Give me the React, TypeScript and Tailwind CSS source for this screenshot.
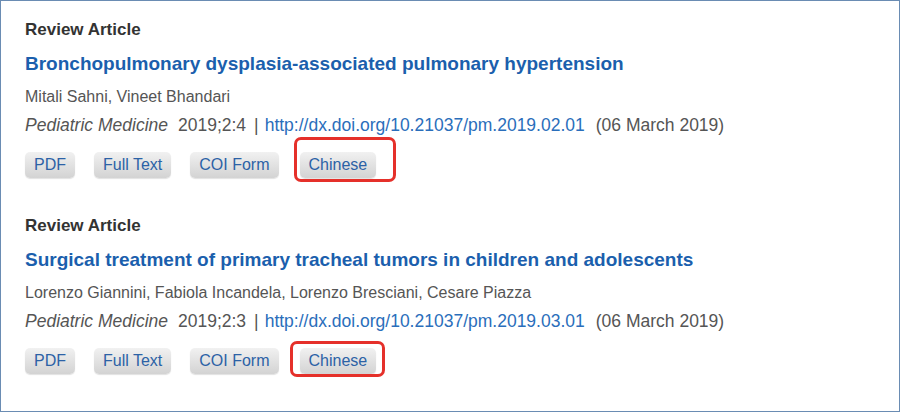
import type { ReactNode } from "react";

type Article = {
  title: string;
  authors: string;
  cite: string;
  doi: string;
  date: string;
  mark: string;
};

const articles: Article[] = [
  {
    title: "Bronchopulmonary dysplasia-associated pulmonary hypertension",
    authors: "Mitali Sahni, Vineet Bhandari",
    cite: "2019;2:4",
    doi: "http://dx.doi.org/10.21037/pm.2019.02.01",
    date: "(06 March 2019)",
    mark: "-left-[6px] -right-[20px] -top-[15px] -bottom-[4px]",
  },
  {
    title: "Surgical treatment of primary tracheal tumors in children and adolescents",
    authors: "Lorenzo Giannini, Fabiola Incandela, Lorenzo Bresciani, Cesare Piazza",
    cite: "2019;2:3",
    doi: "http://dx.doi.org/10.21037/pm.2019.03.01",
    date: "(06 March 2019)",
    mark: "-left-[10px] -right-[9px] -top-[7px] -bottom-[3px]",
  },
];

function Pill({ children }: { children: ReactNode }) {
  return (
    <span className="inline-flex h-[26px] items-center rounded-[5px] bg-gradient-to-b from-[#f1f1f1] to-[#d3d3d3] px-[9px] text-[16px] text-[#2c62a6] shadow-[0_1px_1px_rgba(0,0,0,0.12)]">
      {children}
    </span>
  );
}

function ArticleItem({ article }: { article: Article }) {
  return (
    <div className="mb-[38px]">
      <div className="text-[17px] font-bold leading-[20px] text-[#333]">Review Article</div>
      <div className="mt-3 text-[19px] font-bold leading-[24px] text-[#1b5fad]">{article.title}</div>
      <div className="mt-[11px] text-[16px] leading-[20px] text-[#555]">{article.authors}</div>
      <div className="mt-2 flex items-baseline whitespace-nowrap text-[17.5px] leading-[20px] text-[#555]">
        <i>Pediatric Medicine</i>
        <span className="ml-[10px]">{article.cite}</span>
        <span className="ml-[8px]">|</span>
        <span className="ml-[6px] text-[#2a6ebb]">{article.doi}</span>
        <span className="ml-[11px]">{article.date}</span>
      </div>
      <div className="mt-[17px] flex gap-[19px]">
        <Pill>PDF</Pill>
        <Pill>Full Text</Pill>
        <Pill>COI Form</Pill>
        <span className="relative ml-[2px]">
          <Pill>Chinese</Pill>
          <span className={`absolute rounded-[7px] border-[3px] border-[#e5302a] ${article.mark}`} />
        </span>
      </div>
    </div>
  );
}

export default function App() {
  return (
    <div
      className="h-[412px] w-[900px] overflow-hidden border border-[#6a8cb3] bg-white pl-[24px] pt-[19px]"
      style={{ fontFamily: "'Liberation Sans', Arial, sans-serif" }}
    >
      {articles.map((a) => (
        <ArticleItem key={a.doi} article={a} />
      ))}
    </div>
  );
}
